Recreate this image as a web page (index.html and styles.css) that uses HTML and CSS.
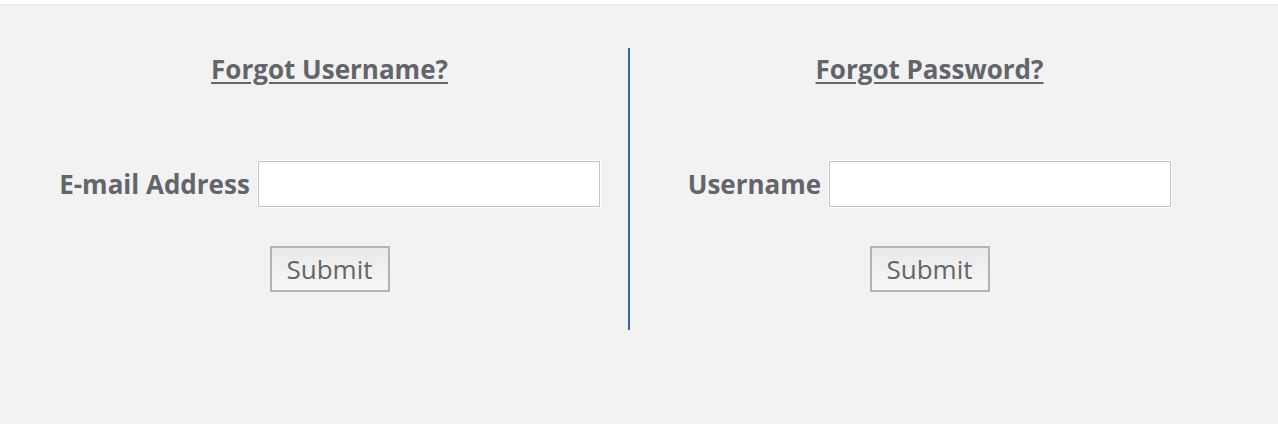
FILE: index.html
```html
<!DOCTYPE html>
<html lang="en">
<head>
<meta charset="UTF-8" />
<meta name="viewport" content="width=device-width, initial-scale=1" />
<title>Account Recovery</title>
<link rel="stylesheet" href="styles.css">
</head>
<body>
  <div class="recovery">
    <div class="panel">
      <h2><a href="#" class="panel-title">Forgot Username?</a></h2>
      <form class="recover-form">
        <div class="field">
          <label for="recover-email">E-mail Address</label>
          <input type="email" id="recover-email" name="recover-email" />
        </div>
        <button type="submit">Submit</button>
      </form>
    </div>
    <div class="panel panel-right">
      <h2><a href="#" class="panel-title">Forgot Password?</a></h2>
      <form class="recover-form">
        <div class="field">
          <label for="recover-username">Username</label>
          <input type="text" id="recover-username" name="recover-username" />
        </div>
        <button type="submit">Submit</button>
      </form>
    </div>
  </div>
</body>
</html>
```

FILE: styles.css
```css
* {
  box-sizing: border-box;
}
body {
  margin: 0;
  background: #fff;
  font-family: 'Open Sans', 'Noto Sans', sans-serif;
  color: #626569;
}
.recovery {
  margin-top: 4px;
  border-top: 2px solid #e9e9e9;
  background: #f2f2f2;
  height: 420px;
  display: flex;
  padding: 42px 0 0 31px;
}
.panel {
  width: 597px;
  height: 282px;
  display: flex;
  flex-direction: column;
  align-items: center;
}
.panel-right {
  width: 601px;
  border-left: 2px solid #3068a0;
}
h2 {
  margin: 0;
  font-size: 26px;
  line-height: 42px;
  font-weight: 700;
}
.panel-title {
  color: #626569;
  text-decoration: underline;
  text-underline-offset: 3px;
  text-decoration-thickness: 2px;
}
.recover-form {
  display: flex;
  flex-direction: column;
  align-items: center;
  margin-top: 71px;
}
.field {
  display: flex;
  align-items: center;
  gap: 8px;
}
label {
  font-size: 26px;
  font-weight: 700;
  color: #626569;
}
input[type="text"],
input[type="email"] {
  width: 342px;
  height: 46px;
  border: 1px solid #c4c4c4;
  outline: 1px solid #fff;
  background: #fff;
  font-size: 18px;
  padding: 0 8px;
}
button {
  margin-top: 39px;
  width: 120px;
  height: 46px;
  border: 2px solid #b3b3b3;
  background: linear-gradient(#e9e9e9, #f7f7f7);
  color: #626569;
  font-family: inherit;
  font-size: 26px;
  padding: 0;
  cursor: pointer;
}
```
